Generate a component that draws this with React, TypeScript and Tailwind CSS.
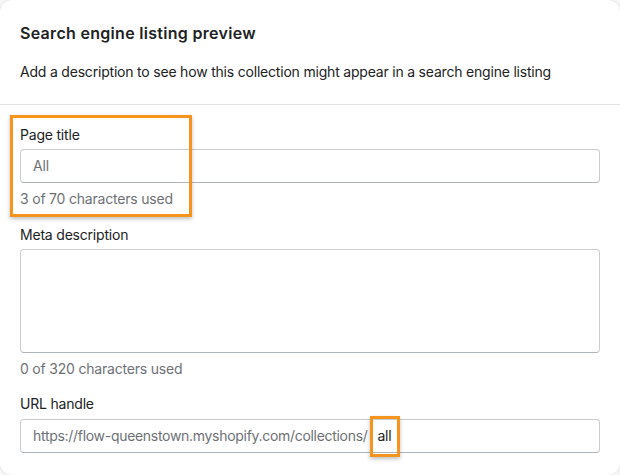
export default function App() {
  return (
    <div className="h-[475px] w-[620px] overflow-hidden bg-[#f6f6f7] font-['Inter',sans-serif] text-[#202223]">
      <div className="relative h-full w-full rounded-xl bg-white shadow-[0_0_2px_rgba(0,0,0,0.15)]">
        <div className="px-5 pt-[22px] pb-[22px]">
          <h2 className="text-[16px] leading-[22px] font-semibold tracking-[0.3px]">Search engine listing preview</h2>
          <p className="mt-[18px] text-[14px] leading-5 tracking-[-0.2px]">
            Add a description to see how this collection might appear in a search engine listing
          </p>
        </div>
        <div className="border-t border-[#e1e3e5]" />
        <div className="px-5 pt-[20px] text-[14px] leading-5 tracking-[-0.2px]">
          <label className="block">Page title</label>
          <div className="mt-[4px] flex h-[34px] items-center rounded-[4px] border border-[#c9cccf] border-b-[#aeb4b9] px-3 text-[#6d7175]">
            All
          </div>
          <p className="mt-[6px] text-[#6d7175]">3 of 70 characters used</p>

          <label className="mt-[16px] block">Meta description</label>
          <div className="mt-[4px] h-[104px] rounded-[4px] border border-[#c9cccf] border-b-[#aeb4b9]" />
          <p className="mt-[6px] text-[#6d7175]">0 of 320 characters used</p>

          <label className="mt-[15px] block">URL handle</label>
          <div className="mt-[5px] flex h-[34px] items-center rounded-[4px] border border-[#c9cccf] border-b-[#aeb4b9] px-3 tracking-[-0.3px]">
            <span className="text-[#6d7175]">https://flow-queenstown.myshopify.com/collections/</span>
            <span className="relative ml-[10px] text-[#202223]">
              all
              <span className="absolute -left-[8px] -right-[9px] -top-[10px] -bottom-[11px] border-[3px] border-[#f7941d] shadow-[0_2px_4px_rgba(0,0,0,0.25)]" />
            </span>
          </div>
        </div>

        <div className="absolute left-[10px] top-[115px] h-[102px] w-[182px] border-[3px] border-[#f7941d] shadow-[0_2px_4px_rgba(0,0,0,0.25)]" />
      </div>
    </div>
  );
}
